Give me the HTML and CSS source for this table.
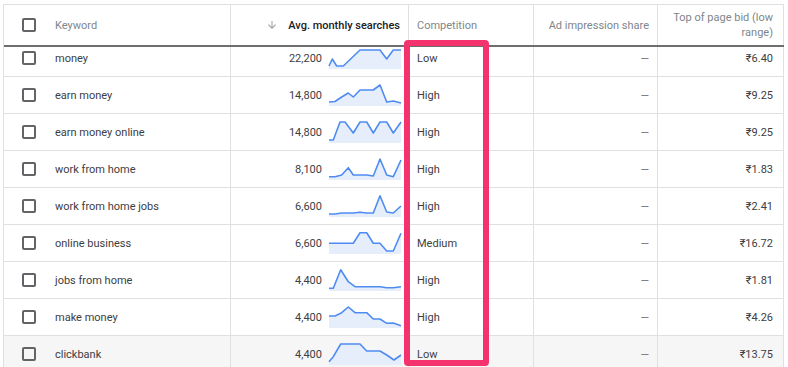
FILE: index.html
```html
<!DOCTYPE html>
<html>
<head>
<meta charset="utf-8">
<link rel="stylesheet" href="styles.css">
</head>
<body>
<div class="table">
  <div class="row head">
    <div class="cell c-kw"><span class="cb"></span><span class="hlabel">Keyword</span></div>
    <div class="cell c-avg"><svg class="sort" viewBox="0 0 24 24" width="12" height="12"><path d="M20 12l-1.41-1.41L13 16.17V4h-2v12.17l-5.58-5.59L4 12l8 8 8-8z" fill="#9aa0a6"/></svg><span class="hbold">Avg. monthly searches</span></div>
    <div class="cell c-comp"><span class="hlabel">Competition</span></div>
    <div class="cell c-ad"><span class="hlabel">Ad impression share</span></div>
    <div class="cell c-bid"><span class="hlabel">Top of page bid (low range)</span></div>
  </div>
  <div class="viewport">
    <div class="tbody">
      <div class="row">
        <div class="cell c-kw"><span class="cb"></span><span>money</span></div>
        <div class="cell c-avg"><span>22,200</span><svg class="spark" viewBox="0 0 72 22"><path class="area" d="M0,19 L3.3,12 L7.7,19 L14.3,19 L31,3 L51,3 L57.7,12 L64.3,3 L72,3 L72,22 L0,22 Z"/><polyline class="line" points="0,19 3.3,12 7.7,19 14.3,19 31,3 51,3 57.7,12 64.3,3 72,3"/></svg></div>
        <div class="cell c-comp">Low</div>
        <div class="cell c-ad"><span class="dash">—</span></div>
        <div class="cell c-bid">₹6.40</div>
      </div>
      <div class="row">
        <div class="cell c-kw"><span class="cb"></span><span>earn money</span></div>
        <div class="cell c-avg"><span>14,800</span><svg class="spark" viewBox="0 0 72 22"><path class="area" d="M0,18 L6,17.5 L12.7,13 L19.3,9 L24.3,13 L31,6 L44.3,6 L51,1 L57.7,18 L64.3,17 L72,19 L72,22 L0,22 Z"/><polyline class="line" points="0,18 6,17.5 12.7,13 19.3,9 24.3,13 31,6 44.3,6 51,1 57.7,18 64.3,17 72,19"/></svg></div>
        <div class="cell c-comp">High</div>
        <div class="cell c-ad"><span class="dash">—</span></div>
        <div class="cell c-bid">₹9.25</div>
      </div>
      <div class="row">
        <div class="cell c-kw"><span class="cb"></span><span>earn money online</span></div>
        <div class="cell c-avg"><span>14,800</span><svg class="spark" viewBox="0 0 72 22"><path class="area" d="M0,19 L4.3,19 L11,1 L16,1 L24.3,12 L31,1 L37.7,1 L44.3,12 L51,1 L57.7,1 L64.3,12 L72,1 L72,22 L0,22 Z"/><polyline class="line" points="0,19 4.3,19 11,1 16,1 24.3,12 31,1 37.7,1 44.3,12 51,1 57.7,1 64.3,12 72,1"/></svg></div>
        <div class="cell c-comp">High</div>
        <div class="cell c-ad"><span class="dash">—</span></div>
        <div class="cell c-bid">₹9.25</div>
      </div>
      <div class="row">
        <div class="cell c-kw"><span class="cb"></span><span>work from home</span></div>
        <div class="cell c-avg"><span>8,100</span><svg class="spark" viewBox="0 0 72 22"><path class="area" d="M0,18.7 L6,18.7 L12.7,17 L19.3,9.7 L24.3,17 L37.7,17 L44.3,18 L51,1 L57.7,17 L64.3,18.7 L72,2 L72,22 L0,22 Z"/><polyline class="line" points="0,18.7 6,18.7 12.7,17 19.3,9.7 24.3,17 37.7,17 44.3,18 51,1 57.7,17 64.3,18.7 72,2"/></svg></div>
        <div class="cell c-comp">High</div>
        <div class="cell c-ad"><span class="dash">—</span></div>
        <div class="cell c-bid">₹1.83</div>
      </div>
      <div class="row">
        <div class="cell c-kw"><span class="cb"></span><span>work from home jobs</span></div>
        <div class="cell c-avg"><span>6,600</span><svg class="spark" viewBox="0 0 72 22"><path class="area" d="M0,19 L6,19 L12.7,18 L24.3,18 L31,17.3 L37.7,18 L44.3,18 L51,0.8 L57.7,17 L64.3,18 L72,11 L72,22 L0,22 Z"/><polyline class="line" points="0,19 6,19 12.7,18 24.3,18 31,17.3 37.7,18 44.3,18 51,0.8 57.7,17 64.3,18 72,11"/></svg></div>
        <div class="cell c-comp">High</div>
        <div class="cell c-ad"><span class="dash">—</span></div>
        <div class="cell c-bid">₹2.41</div>
      </div>
      <div class="row">
        <div class="cell c-kw"><span class="cb"></span><span>online business</span></div>
        <div class="cell c-avg"><span>6,600</span><svg class="spark" viewBox="0 0 72 22"><path class="area" d="M0,11.3 L24.3,11.3 L31,0.8 L37.7,0.8 L44.3,11.3 L51,11.3 L57.7,19 L64.3,19 L72,1.3 L72,22 L0,22 Z"/><polyline class="line" points="0,11.3 24.3,11.3 31,0.8 37.7,0.8 44.3,11.3 51,11.3 57.7,19 64.3,19 72,1.3"/></svg></div>
        <div class="cell c-comp">Medium</div>
        <div class="cell c-ad"><span class="dash">—</span></div>
        <div class="cell c-bid">₹16.72</div>
      </div>
      <div class="row">
        <div class="cell c-kw"><span class="cb"></span><span>jobs from home</span></div>
        <div class="cell c-avg"><span>4,400</span><svg class="spark" viewBox="0 0 72 22"><path class="area" d="M0,19.3 L4.3,19.3 L11.7,0.8 L19.3,12.7 L26,17.7 L51,17.7 L57.7,18.7 L64.3,18.7 L72,17.7 L72,22 L0,22 Z"/><polyline class="line" points="0,19.3 4.3,19.3 11.7,0.8 19.3,12.7 26,17.7 51,17.7 57.7,18.7 64.3,18.7 72,17.7"/></svg></div>
        <div class="cell c-comp">High</div>
        <div class="cell c-ad"><span class="dash">—</span></div>
        <div class="cell c-bid">₹1.81</div>
      </div>
      <div class="row">
        <div class="cell c-kw"><span class="cb"></span><span>make money</span></div>
        <div class="cell c-avg"><span>4,400</span><svg class="spark" viewBox="0 0 72 22"><path class="area" d="M0,10 L6,10 L12.7,6.7 L19.3,1 L26,6.7 L37.7,6.7 L44.3,13 L51,13 L57.7,17.3 L64.3,17 L72,19.7 L72,22 L0,22 Z"/><polyline class="line" points="0,10 6,10 12.7,6.7 19.3,1 26,6.7 37.7,6.7 44.3,13 51,13 57.7,17.3 64.3,17 72,19.7"/></svg></div>
        <div class="cell c-comp">High</div>
        <div class="cell c-ad"><span class="dash">—</span></div>
        <div class="cell c-bid">₹4.26</div>
      </div>
      <div class="row hover">
        <div class="cell c-kw"><span class="cb"></span><span>clickbank</span></div>
        <div class="cell c-avg"><span>4,400</span><svg class="spark" viewBox="0 0 72 22"><path class="area" d="M0,18.7 L4.3,13.7 L11.7,1 L31,1 L37.7,8 L51,8 L57.7,12 L65,17 L72,12 L72,22 L0,22 Z"/><polyline class="line" points="0,18.7 4.3,13.7 11.7,1 31,1 37.7,8 51,8 57.7,12 65,17 72,12"/></svg></div>
        <div class="cell c-comp">Low</div>
        <div class="cell c-ad"><span class="dash">—</span></div>
        <div class="cell c-bid">₹13.75</div>
      </div>
    </div>
  </div>
  <div class="highlight"></div>
</div>
</body>
</html>
```
FILE: styles.css
```css
html, body {
  margin: 0;
  padding: 0;
  background: #fff;
  overflow: hidden;
}
body {
  font-family: Roboto, "Liberation Sans", Arial, sans-serif;
  font-size: 11px;
  color: #3c4043;
}
.table {
  position: relative;
  margin: 4px 0 0 3px;
  width: 780px;
  border-left: 1px solid #e0e0e0;
  border-top: 1px solid #e0e0e0;
}
.row {
  display: grid;
  grid-template-columns: 227px 178px 125px 124px 126px;
  height: 37px;
  box-sizing: border-box;
  border-bottom: 1px solid #e0e0e0;
}
.row.head {
  height: 42px;
  border-bottom: 2px solid #6e6e6e;
  position: relative;
  z-index: 1;
  background: #fff;
}
.row.hover {
  background: #f6f6f6;
}
.cell {
  border-right: 1px solid #e0e0e0;
  display: flex;
  align-items: center;
  box-sizing: border-box;
  min-width: 0;
}
.viewport {
  overflow: hidden;
  height: 330px;
}
.tbody {
  margin-top: -7px;
}
.c-kw {
  padding-left: 18px;
  gap: 19px;
}
.cb {
  width: 14px;
  height: 14px;
  box-sizing: border-box;
  border: 2px solid #626468;
  border-radius: 2px;
  flex: none;
}
.c-avg {
  justify-content: flex-end;
  padding-right: 7px;
  gap: 7px;
}
.head .c-avg {
  padding-right: 8px;
  gap: 10px;
}
.c-comp {
  padding-left: 8px;
}
.c-ad {
  justify-content: flex-end;
  padding-right: 8px;
}
.c-bid {
  justify-content: flex-end;
  padding-right: 10px;
  text-align: right;
}
.hlabel {
  color: #80868b;
  line-height: 15px;
}
.hbold {
  color: #202124;
  font-weight: 500;
}
.sort {
  display: block;
}
.dash {
  color: #70757a;
}
.spark {
  width: 72px;
  height: 22px;
  overflow: visible;
  flex: none;
}
.spark .area {
  fill: #e6eefc;
}
.spark .line {
  fill: none;
  stroke: #4f8cf2;
  stroke-width: 1.6;
  stroke-linejoin: round;
}
.highlight {
  position: absolute;
  left: 400px;
  top: 35px;
  width: 85px;
  height: 326px;
  box-sizing: border-box;
  border: 6px solid #f4336e;
  border-radius: 4px;
  z-index: 2;
}
```
